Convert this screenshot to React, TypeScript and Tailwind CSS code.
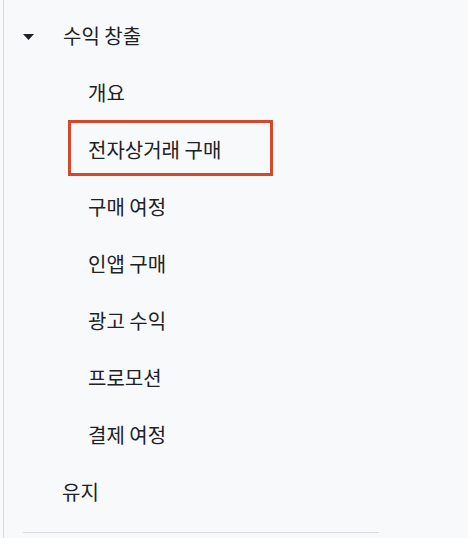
const items = ["개요", "전자상거래 구매", "구매 여정", "인앱 구매", "광고 수익", "프로모션", "결제 여정"];

export default function App() {
  return (
    <main
      className="w-[468px] h-[538px] bg-[#f8f9fa] overflow-hidden text-[#202124]"
      style={{ fontFamily: '"Noto Sans CJK KR", "Noto Sans", sans-serif' }}
    >
      <nav className="ml-[3px] h-full border-l border-[#dadce0] pt-[7px]">
        {/* Section header */}
        <div className="h-[57px] flex items-center pl-[19px]">
          <svg width="11" height="6" viewBox="0 0 11 6" className="mr-[29px] mt-[3px]">
            <path d="M0 0h11L5.5 6z" fill="#202124" />
          </svg>
          <span className="text-[20px]">수익 창출</span>
        </div>

        {items.map((label) => (
          <div key={label} className="relative h-[57px] flex items-center pl-[84px]">
            {label === "전자상거래 구매" && (
              <div className="absolute left-[64px] top-[-1px] w-[205px] h-[56px] border-[3px] border-[#d9472b]" />
            )}
            <span className="text-[20px]">{label}</span>
          </div>
        ))}

        <div className="h-[57px] flex items-center pl-[58px]">
          <span className="text-[20px]">유지</span>
        </div>

        <div className="ml-[19px] mt-[12px] w-[356px] border-t border-[#dadce0]" />
      </nav>
    </main>
  );
}
